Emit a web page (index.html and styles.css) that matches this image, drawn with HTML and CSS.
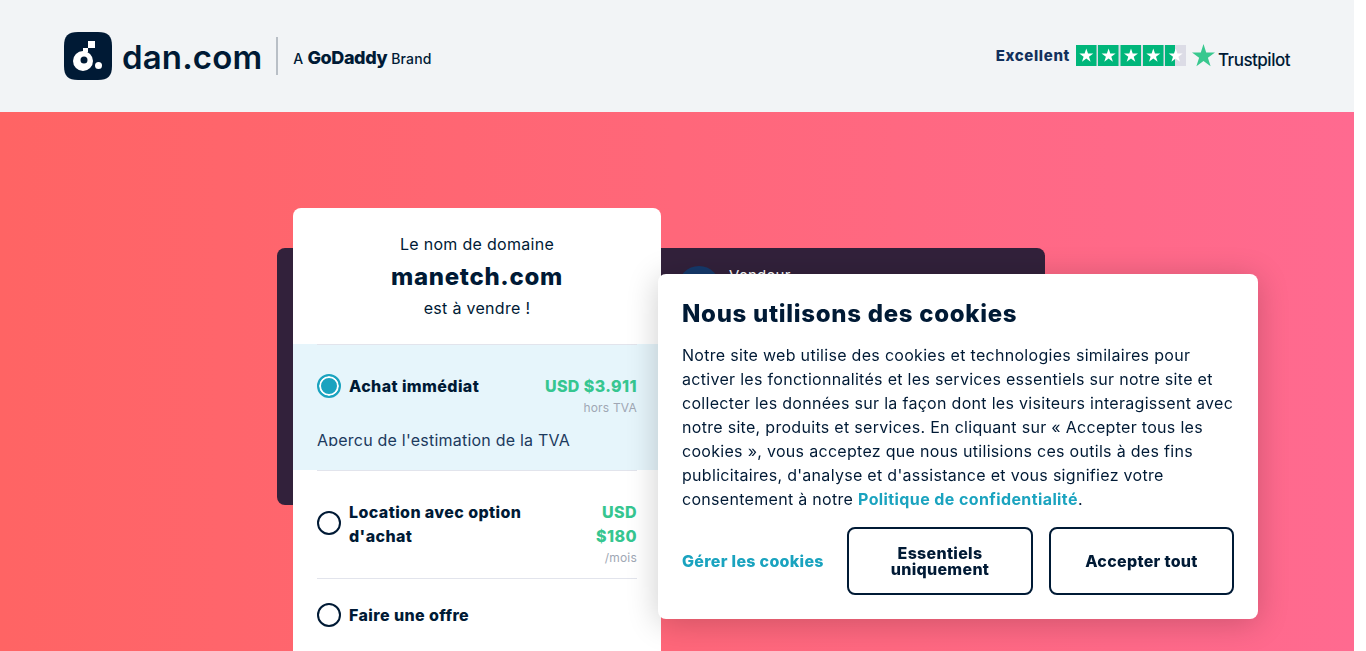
FILE: index.html
```html
<!DOCTYPE html>
<html lang="fr">
<head>
  <meta charset="UTF-8">
  <title>manetch.com est à vendre</title>
  <link rel="stylesheet" href="styles.css">
</head>
<body>
<div class="page">
  <header class="top">
    <div class="brand">
      <svg class="brand-icon" width="48" height="48" viewBox="0 0 48 48">
        <path fill="#001a35" d="M14 0h20c10 0 14 4 14 14v20c0 10-4 14-14 14H14C4 48 0 44 0 34V14C0 4 4 0 14 0z"/>
        <path fill="#fff" fill-rule="evenodd" d="M19 19a10 10 0 1 1-10 10 10 10 0 0 1 10-10zm1 5.500a3.500 3.500 0 1 0 3.500 3.500 3.500 3.500 0 0 0-3.500-3.500z"/>
        <rect fill="#fff" x="24" y="9" width="7" height="7"/>
        <rect fill="#fff" x="19" y="16" width="5" height="4"/>
        <circle fill="#fff" cx="34.500" cy="33.500" r="3.500"/>
      </svg>
      <span class="brand-name">dan.com</span>
      <span class="brand-line"></span>
      <span class="brand-sub">A <b>GoDaddy</b> Brand</span>
    </div>
    <div class="trust">
      <span class="trust-word">Excellent</span>
      <svg width="110" height="21" viewBox="0 0 110 21">
        <rect width="110" height="21" fill="#dcdce6"/>
        <rect width="20.500" height="21" fill="#00b67a"/>
        <rect x="22" width="20.500" height="21" fill="#00b67a"/>
        <rect x="44.500" width="20.500" height="21" fill="#00b67a"/>
        <rect x="67" width="20.500" height="21" fill="#00b67a"/>
        <rect x="89" width="10" height="21" fill="#00b67a"/>
        <g fill="#fff">
          <path id="s" d="M10.300 3.500l1.700 5.100h5.300l-4.300 3.100 1.600 5.100-4.300-3.200-4.300 3.200 1.600-5.100-4.300-3.100h5.300z"/>
          <use href="#s" x="22.300"/>
          <use href="#s" x="44.700"/>
          <use href="#s" x="67"/>
          <use href="#s" x="89.400"/>
        </g>
      </svg>
      <svg class="trust-star" width="23" height="23" viewBox="0 0 23 23">
        <path fill="#39c88f" d="M11.500 0l2.700 8.500h8.800l-7.100 5.200 2.700 8.500-7.100-5.300-7.100 5.300 2.700-8.500L0 8.500h8.800z"/>
      </svg>
      <span class="trust-name">Trustpilot</span>
    </div>
  </header>

  <main class="stage">
    <div class="seller">
      <span class="seller-pic"></span>
      <span class="seller-label">Vendeur</span>
    </div>
    <section class="card">
      <div class="card-head">
        <p>Le nom de domaine</p>
        <h1>manetch.com</h1>
        <p>est à vendre !</p>
      </div>
      <div class="option option-active">
        <div class="option-row">
          <span class="radio radio-on"></span>
          <span class="option-name">Achat immédiat</span>
          <span class="option-price">USD $3.911<small>hors TVA</small></span>
        </div>
        <div class="vat">Aperçu de l'estimation de la TVA</div>
      </div>
      <div class="option">
        <div class="option-row">
          <span class="radio"></span>
          <span class="option-name">Location avec option d'achat</span>
          <span class="option-price option-price-narrow">USD $180<small>/mois</small></span>
        </div>
      </div>
      <div class="option option-last">
        <div class="option-row">
          <span class="radio"></span>
          <span class="option-name">Faire une offre</span>
        </div>
      </div>
    </section>
  </main>

  <div class="cookies">
    <h2>Nous utilisons des cookies</h2>
    <p>Notre site web utilise des cookies et technologies similaires pour activer les fonctionnalités et les services essentiels sur notre site et collecter les données sur la façon dont les visiteurs interagissent avec notre site, produits et services. En cliquant sur « Accepter tous les cookies », vous acceptez que nous utilisions ces outils à des fins publicitaires, d'analyse et d'assistance et vous signifiez votre consentement à notre <a href="#">Politique de confidentialité</a>.</p>
    <div class="cookie-actions">
      <a class="cookie-manage" href="#">Gérer les cookies</a>
      <button class="cookie-btn cookie-btn-first">Essentiels uniquement</button>
      <button class="cookie-btn">Accepter tout</button>
    </div>
  </div>
</div>
<div class="scrollbar"></div>
</body>
</html>
```

FILE: styles.css
```css
html, body {
  height: 100%;
}

body {
  margin: 0;
  display: flex;
  overflow: hidden;
  font-family: "Inter", "Liberation Sans", sans-serif;
  color: #001a35;
  background: #fff;
}

.page {
  flex: 1;
  height: 651px;
  overflow: hidden;
  display: flex;
  flex-direction: column;
  background: linear-gradient(90deg, #ff6464, #ff6a90);
}

.scrollbar {
  width: 12px;
  background: #fff;
}

.top {
  height: 112px;
  flex: none;
  display: flex;
  align-items: center;
  justify-content: space-between;
  padding: 0 64px;
  background: #f2f4f6;
}

.brand {
  display: flex;
  align-items: center;
}

.brand-name {
  margin: 2px 0 0 10px;
  font-size: 33px;
  font-weight: 600;
  letter-spacing: 0.15px;
}

.brand-line {
  width: 2px;
  height: 38px;
  margin: 0 15px 0 14px;
  background: #b9bfc6;
}

.brand-sub {
  margin-top: 3px;
  font-size: 14px;
  font-weight: 500;
  letter-spacing: 0.2px;
}

.brand-sub b {
  font-size: 18px;
  font-weight: 800;
  letter-spacing: -0.4px;
}

.trust {
  display: flex;
  align-items: center;
  padding-bottom: 2px;
}

.trust-word {
  margin-right: 6px;
  font-size: 15px;
  font-weight: 800;
  letter-spacing: 0.65px;
  color: #12305c;
}

.trust-star {
  margin: 0 3px 0 6px;
}

.trust-name {
  font-size: 17px;
  font-weight: 500;
  letter-spacing: -0.5px;
  margin-top: 9px;
}

.stage {
  position: relative;
  flex: 1;
  padding: 96px 0 0 293px;
}

.seller {
  position: absolute;
  left: 277px;
  top: 136px;
  width: 768px;
  height: 257px;
  border-radius: 8px;
  background: #32213b;
  color: #fff;
  font-size: 15px;
  letter-spacing: 0.3px;
}

.seller-pic {
  position: absolute;
  left: 401px;
  top: 18px;
  width: 42px;
  height: 42px;
  border-radius: 50%;
  background: #163a6c;
}

.seller-label {
  position: absolute;
  left: 452px;
  top: 18px;
}

.card {
  position: relative;
  width: 368px;
  border-radius: 8px;
  background: #fff;
  overflow: hidden;
}

.card-head {
  height: 136px;
  padding-top: 24px;
  box-sizing: border-box;
  text-align: center;
}

.card-head p {
  margin: 0;
  font-size: 16px;
  line-height: 24px;
  letter-spacing: 0.3px;
}

.card-head h1 {
  margin: 5px 0 3px;
  font-size: 24px;
  line-height: 32px;
  font-weight: 800;
  letter-spacing: 0.7px;
}

.option {
  position: relative;
  height: 108px;
  padding: 30px 24px 0;
  box-sizing: border-box;
}

.option::before {
  content: "";
  position: absolute;
  left: 24px;
  right: 24px;
  top: 0;
  height: 1px;
  background: #e2e4ec;
}

.option-active {
  height: 126px;
  background: #e6f5fb;
}

.option-last {
  padding-top: 25px;
}

.option-row {
  display: flex;
  align-items: flex-start;
}

.radio {
  flex: none;
  width: 24px;
  height: 24px;
  margin: 11px 8px 0 0;
  box-sizing: border-box;
  border: 2px solid #001a35;
  border-radius: 50%;
  background: #fff;
}

.option-active .radio,
.option-last .radio {
  margin-top: 0;
}

.radio-on {
  border-color: #1aa3bf;
  background: #1aa3bf;
  box-shadow: inset 0 0 0 2px #fff;
}

.option-name {
  flex: 1;
  font-size: 16px;
  line-height: 24px;
  font-weight: 800;
  letter-spacing: 0.4px;
}

.option-price {
  flex: none;
  text-align: right;
  font-size: 16px;
  line-height: 24px;
  font-weight: 800;
  letter-spacing: 0.4px;
  color: #36c690;
}

.option-price-narrow {
  width: 70px;
}

.option-price small {
  display: block;
  font-size: 12px;
  line-height: 20px;
  font-weight: 400;
  letter-spacing: 0.2px;
  color: #a0a7b4;
}

.vat {
  height: 18px;
  margin-top: 10px;
  overflow: hidden;
  font-size: 16px;
  line-height: 24px;
  letter-spacing: 0.22px;
  color: #1c3a5e;
}

.cookies {
  position: fixed;
  left: 658px;
  top: 274px;
  width: 600px;
  height: 345px;
  padding: 24px;
  box-sizing: border-box;
  border-radius: 8px;
  background: #fff;
  box-shadow: 0 4px 32px rgba(0, 0, 0, 0.2);
}

.cookies h2 {
  margin: 0 0 13px;
  font-size: 24px;
  line-height: 32px;
  font-weight: 800;
  letter-spacing: 0.7px;
}

.cookies p {
  margin: 0;
  font-size: 16px;
  line-height: 24px;
  letter-spacing: 0.3px;
}

.cookies p a {
  color: #1aa3bf;
  font-weight: 700;
  letter-spacing: 0.4px;
  text-decoration: none;
}

.cookie-actions {
  display: flex;
  align-items: center;
  margin-top: 16px;
}

.cookie-manage {
  flex: 1;
  color: #1aa3bf;
  font-size: 16px;
  font-weight: 800;
  letter-spacing: 0.3px;
  text-decoration: none;
}

.cookie-btn {
  width: 185px;
  height: 68px;
  padding: 0 24px;
  border: 2px solid #001a35;
  border-radius: 8px;
  background: #fff;
  color: #001a35;
  font-family: inherit;
  font-size: 16px;
  line-height: 16px;
  font-weight: 800;
  letter-spacing: 0.3px;
}

.cookie-btn-first {
  width: 186px;
  margin-right: 16px;
}
```
